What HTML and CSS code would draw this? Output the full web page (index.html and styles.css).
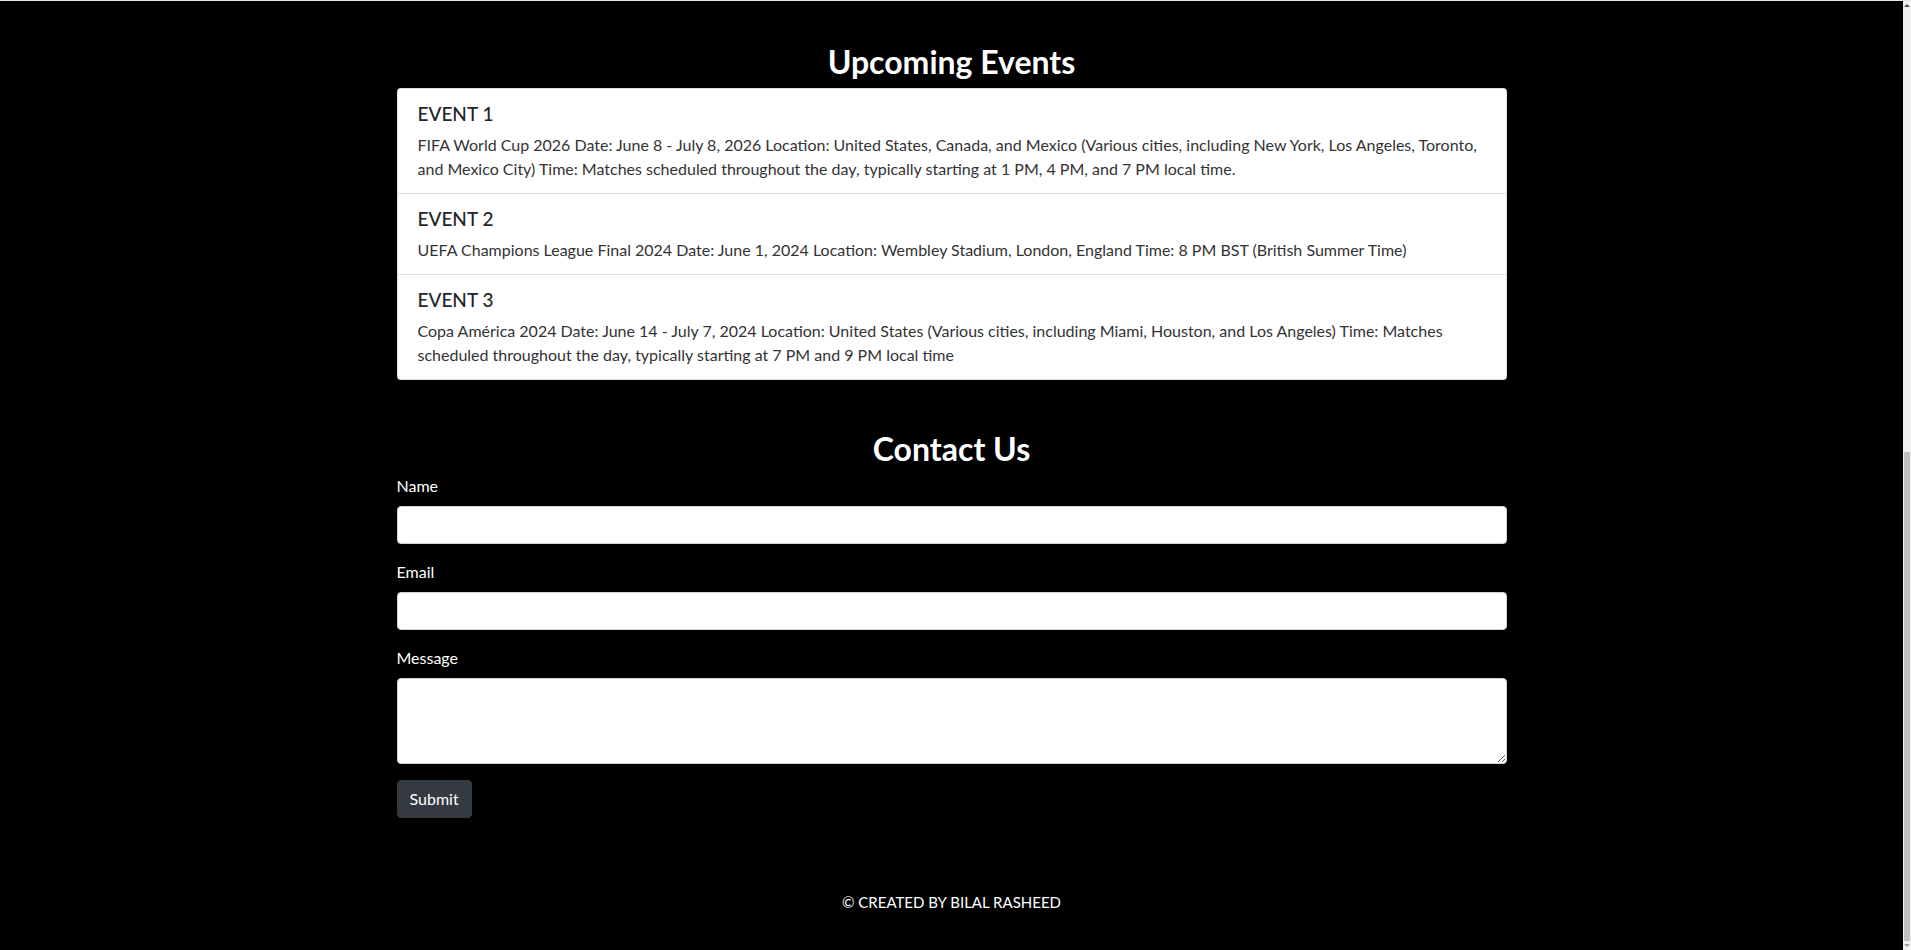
FILE: index.html
```html
<!DOCTYPE html>
<html lang="en">
<head>
<meta charset="utf-8">
<title>Events</title>
<link rel="stylesheet" href="styles.css">
</head>
<body>
<div class="window">
  <main class="page">
    <section class="events container">
      <h2 class="section-title">Upcoming Events</h2>
      <ul class="event-list">
        <li class="event-item">
          <h5 class="event-title">EVENT 1</h5>
          <p class="event-text">FIFA World Cup 2026 Date: June 8 - July 8, 2026 Location: United States, Canada, and Mexico (Various cities, including New York, Los Angeles, Toronto, and Mexico City) Time: Matches scheduled throughout the day, typically starting at 1 PM, 4 PM, and 7 PM local time.</p>
        </li>
        <li class="event-item">
          <h5 class="event-title">EVENT 2</h5>
          <p class="event-text">UEFA Champions League Final 2024 Date: June 1, 2024 Location: Wembley Stadium, London, England Time: 8 PM BST (British Summer Time)</p>
        </li>
        <li class="event-item">
          <h5 class="event-title">EVENT 3</h5>
          <p class="event-text">Copa América 2024 Date: June 14 - July 7, 2024 Location: United States (Various cities, including Miami, Houston, and Los Angeles) Time: Matches scheduled throughout the day, typically starting at 7 PM and 9 PM local time</p>
        </li>
      </ul>
    </section>
    <section class="contact container">
      <h2 class="section-title">Contact Us</h2>
      <form class="contact-form">
        <div class="form-group">
          <label class="form-label" for="name">Name</label>
          <input class="form-control" id="name" type="text">
        </div>
        <div class="form-group">
          <label class="form-label" for="email">Email</label>
          <input class="form-control" id="email" type="email">
        </div>
        <div class="form-group">
          <label class="form-label" for="message">Message</label>
          <textarea class="form-control form-textarea" id="message" rows="3"></textarea>
        </div>
        <button class="btn-submit" type="button">Submit</button>
      </form>
    </section>
    <footer class="footer">© CREATED BY BILAL RASHEED</footer>
  </main>
  <div class="scrollbar">
    <span class="sb-arrow sb-up"></span>
    <div class="sb-track">
      <div class="sb-thumb"></div>
    </div>
    <span class="sb-arrow sb-down"></span>
  </div>
</div>
</body>
</html>
```
FILE: styles.css
```css
* {
  box-sizing: border-box;
}

html, body {
  margin: 0;
  padding: 0;
  height: 100%;
  overflow: hidden;
  background: #000;
}

body {
  font-family: Lato, "Open Sans", sans-serif;
  color: #fff;
}

.window {
  display: flex;
  height: 950px;
  border-top: 1px solid #e6e6e6;
}

.page {
  flex: 1;
  display: flex;
  flex-direction: column;
  align-items: center;
  min-width: 0;
}

.container {
  width: 1140px;
  padding: 0 15px;
}

.events {
  padding-top: 43px;
}

.section-title {
  margin: 0 0 9px;
  font-size: 32px;
  line-height: 35px;
  font-weight: 700;
  text-align: center;
  color: #fff;
}

.event-list {
  list-style: none;
  margin: 0;
  padding: 0;
  background: #fff;
  border: 1px solid rgba(0, 0, 0, 0.125);
  border-radius: 4px;
  overflow: hidden;
}

.event-item {
  padding: 12px 20px;
  color: #212529;
}

.event-item + .event-item {
  border-top: 1px solid #dfdfdf;
}

.event-title {
  margin: 0 0 8px;
  padding-top: 1px;
  font-size: 19px;
  line-height: 23px;
  font-weight: 500;
  color: #212529;
}

.event-text {
  margin: 0;
  font-size: 16px;
  line-height: 24px;
  color: #333;
}

.contact {
  padding-top: 51px;
}

.contact .section-title {
  margin-bottom: 8px;
}

.form-group {
  display: flex;
  flex-direction: column;
  margin-bottom: 16px;
}

.form-label {
  margin-bottom: 8px;
  font-size: 16px;
  line-height: 24px;
  color: #fff;
}

.form-control {
  display: block;
  width: 100%;
  height: 38px;
  padding: 6px 12px;
  font-family: inherit;
  font-size: 16px;
  line-height: 24px;
  color: #495057;
  background: #fff;
  border: 1px solid #ced4da;
  border-radius: 4px;
}

.form-textarea {
  height: 86px;
  resize: vertical;
}

.btn-submit {
  display: block;
  height: 38px;
  padding: 6px 12px;
  font-family: inherit;
  font-size: 16px;
  line-height: 24px;
  color: #fff;
  background: #343a40;
  border: 1px solid #343a40;
  border-radius: 4px;
}

.footer {
  margin-top: 72px;
  font-size: 15px;
  line-height: 24px;
  color: #fff;
  text-align: center;
}

.scrollbar {
  width: 8px;
  flex: none;
  display: flex;
  flex-direction: column;
  align-items: center;
  background: #f1f1f1;
}

.sb-arrow {
  width: 0;
  height: 0;
  border-left: 3px solid transparent;
  border-right: 3px solid transparent;
  margin: 3px 0;
}

.sb-up {
  border-bottom: 3px solid #505050;
}

.sb-down {
  border-top: 3px solid #a3a3a3;
}

.sb-track {
  flex: 1;
  width: 100%;
  display: flex;
  flex-direction: column;
  justify-content: flex-end;
  align-items: center;
}

.sb-thumb {
  width: 6px;
  height: 489px;
  background: #c1c1c1;
}
```
